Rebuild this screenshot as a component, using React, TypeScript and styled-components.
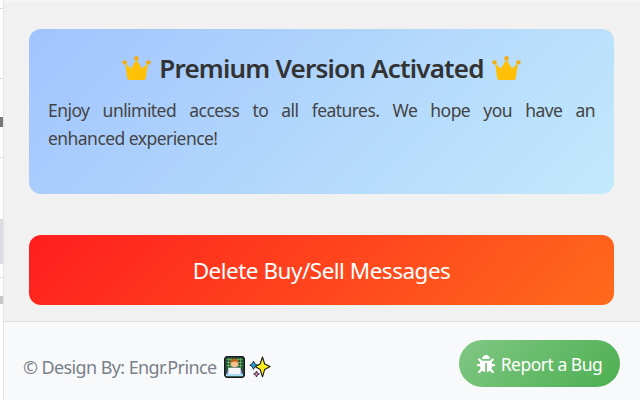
import React from 'react';
import styled, { createGlobalStyle } from 'styled-components';
import { FaBug } from 'react-icons/fa';

const GlobalStyle = createGlobalStyle`
  html, body {
    margin: 0;
    padding: 0;
    width: 640px;
    height: 400px;
    overflow: hidden;
    background: #ffffff;
  }
  body, button {
    font-family: "Noto Sans", "Open Sans", "Liberation Sans", sans-serif;
  }
`;

const Crown = () => (
  <CrownSvg viewBox="0 0 30 26" aria-hidden="true">
    <path
      d="M3.2 7.6 L9.2 13 L14.9 3.6 L20.8 13 L26.8 7.6 L24.8 22.6 Q24.6 25 22.4 25 L7.6 25 Q5.4 25 5.2 22.6 Z"
      fill="#ffc107"
      strokeLinejoin="round"
    />
    <circle cx="2.6" cy="6.6" r="2.3" fill="#f5ac0c" />
    <circle cx="15" cy="2.4" r="2.3" fill="#f5ac0c" />
    <circle cx="27.4" cy="6.6" r="2.3" fill="#f5ac0c" />
  </CrownSvg>
);

const Technologist = () => (
  <EmojiSvg width="21" height="22" viewBox="0 0 21 22" aria-hidden="true">
    <rect x="0.6" y="0.6" width="19.8" height="20.8" rx="3" fill="#24503c" stroke="#14161a" strokeWidth="1.3" />
    <path d="M2.5 3.5H18.5M2.5 6.5H18.5M2.5 9.5H18.5M4.5 2V13M7 2V13M14 2V13M16.5 2V13" stroke="#6fb55c" strokeWidth="0.8" />
    <circle cx="10.5" cy="7.4" r="3.8" fill="#f7c28c" />
    <path d="M6.5 7.2 Q6.4 2.6 10.5 2.6 Q14.6 2.6 14.5 7.2 Q12.6 5.2 10.5 5.4 Q8.2 5.4 6.5 7.2Z" fill="#b8641c" />
    <path d="M2.4 20 Q2.4 11.6 10.5 11.6 Q18.6 11.6 18.6 20Z" fill="#8f8fe0" />
    <rect x="4.4" y="11.8" width="12.2" height="6.6" rx="0.6" fill="#f2f4f7" />
    <rect x="2" y="18" width="17" height="2.2" fill="#a6dcf2" />
  </EmojiSvg>
);

const Sparkles = () => (
  <EmojiSvg width="22" height="22" viewBox="0 0 21 22" aria-hidden="true">
    <path d="M13 1 L15.2 8 L20.6 10.6 L15.2 13.4 L13 20.8 L10.6 13.4 L5.6 10.6 L10.6 8 Z" fill="#fff019" stroke="#17181a" strokeWidth="1.1" strokeLinejoin="round" />
    <path d="M4 5 L5.4 8 L8.2 9.2 L5.4 10.4 L4 13.4 L2.6 10.4 L0.2 9.2 L2.6 8 Z" fill="#1fa3e0" stroke="#17181a" strokeWidth="0.8" strokeLinejoin="round" />
    <path d="M7 15 L7.9 17 L9.9 17.9 L7.9 18.8 L7 21 L6.1 18.8 L4.1 17.9 L6.1 17 Z" fill="#f17ac0" stroke="#17181a" strokeWidth="0.8" strokeLinejoin="round" />
  </EmojiSvg>
);

const behindMarks = [
  { height: 8, color: '#ffffff' },
  { height: 1, color: '#d9d9d9' },
  { height: 69, color: '#ffffff' },
  { height: 1, color: '#dcdcdc' },
  { height: 38, color: '#ffffff' },
  { height: 10, color: '#777777' },
  { height: 30, color: '#ffffff' },
  { height: 1, color: '#dddddd' },
  { height: 61, color: '#ffffff' },
  { height: 45, color: '#d9dde2' },
  { height: 13, color: '#ffffff' },
  { height: 1, color: '#dddddd' },
  { height: 18, color: '#ffffff' },
  { height: 8, color: '#c6c6c6' },
  { height: 96, color: '#ffffff' },
];

export default function App() {
  return (
    <>
      <GlobalStyle />
      <Page>
        <BehindStrip>
          {behindMarks.map((m, i) => (
            <BehindMark key={i} $height={m.height} $color={m.color} />
          ))}
        </BehindStrip>
        <Popup>
          <Main>
            <PremiumCard>
              <PremiumTitle>
                <Crown />
                <span>Premium Version Activated</span>
                <Crown />
              </PremiumTitle>
              <PremiumText>
                Enjoy unlimited access to all features. We hope you have an{' '}
                <NoBreak>enhanced experience!</NoBreak>
              </PremiumText>
            </PremiumCard>
            <DeleteButton type="button">Delete Buy/Sell Messages</DeleteButton>
          </Main>
          <Footer>
            <Credit>
              <span>© Design By: Engr.Prince</span>
              <Technologist />
              <Sparkles />
            </Credit>
            <BugButton type="button">
              <FaBug size={18} />
              <span>Report a Bug</span>
            </BugButton>
          </Footer>
        </Popup>
      </Page>
    </>
  );
}

const Page = styled.div`
  display: flex;
  width: 640px;
  height: 400px;
  overflow: hidden;
`;

const BehindStrip = styled.div`
  display: flex;
  flex-direction: column;
  flex: 0 0 3px;
`;

const BehindMark = styled.div<{ $height: number; $color: string }>`
  flex: 0 0 ${(p) => p.$height}px;
  background: ${(p) => p.$color};
`;

const Popup = styled.div`
  flex: 1;
  display: flex;
  flex-direction: column;
  border-left: 1px solid #e4e4e4;
`;

const Main = styled.div`
  flex: 1;
  display: flex;
  flex-direction: column;
  gap: 41px;
  padding: 27px 26px 16px 25px;
  background: #f1f1f1;
  border-top: 2px solid #f6f6f6;
`;

const PremiumCard = styled.section`
  height: 165px;
  padding: 20px 19px 0;
  box-sizing: border-box;
  border-radius: 12px;
  background: linear-gradient(135deg, #a1c4fd 0%, #c2e9fb 100%);
  color: #333333;
`;

const PremiumTitle = styled.h2`
  display: flex;
  align-items: center;
  justify-content: center;
  gap: 8px;
  margin: 0;
  height: 38px;
  font-size: 26px;
  font-weight: 600;
  letter-spacing: -0.8px;
  color: #333333;
  white-space: nowrap;
`;

const CrownSvg = styled.svg`
  width: 29px;
  height: 25px;
  flex: none;
`;

const PremiumText = styled.p`
  margin: 9px 0 0;
  font-size: 17.5px;
  line-height: 28px;
  letter-spacing: -0.55px;
  text-align: justify;
  color: #444444;
`;

const NoBreak = styled.span`
  white-space: nowrap;
`;

const DeleteButton = styled.button`
  height: 70px;
  flex: none;
  border: none;
  border-radius: 12px;
  background: linear-gradient(135deg, #ff1e1e 0%, #ff6a1c 100%);
  color: #ffffff;
  font-size: 22.5px;
  letter-spacing: -0.5px;
  padding: 1px 0 0;
  cursor: pointer;
`;

const Footer = styled.footer`
  flex: 0 0 79px;
  display: flex;
  align-items: center;
  justify-content: space-between;
  padding: 0 20px 0 19px;
  box-sizing: border-box;
  background: #f8f9fa;
  border-top: 1px solid #e0e0e0;
`;

const Credit = styled.div`
  display: flex;
  align-items: center;
  gap: 4px;
  margin-top: 12px;
  font-size: 18px;
  letter-spacing: -0.6px;
  color: #78818a;

  span {
    margin-right: 3px;
  }
`;

const EmojiSvg = styled.svg`
  flex: none;
  display: block;
`;

const BugButton = styled.button`
  display: flex;
  align-items: center;
  justify-content: center;
  gap: 6px;
  width: 161px;
  height: 47px;
  margin-top: 5px;
  padding: 0;
  border: none;
  border-radius: 24px;
  background: linear-gradient(135deg, #81c784 0%, #4caf50 100%);
  color: #ffffff;
  font-size: 17.5px;
  letter-spacing: -0.5px;
  cursor: pointer;
`;
